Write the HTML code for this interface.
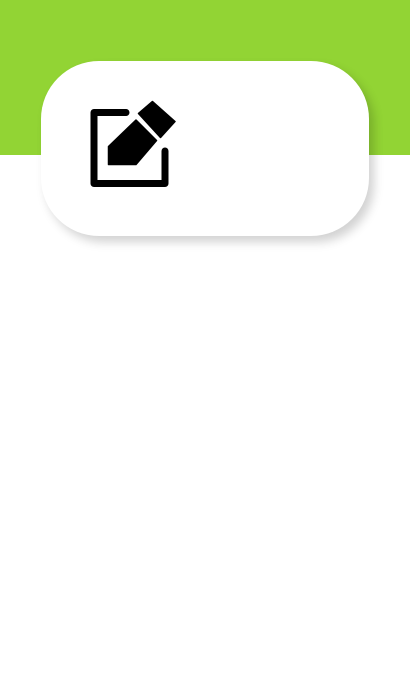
<!DOCTYPE html>
<html><head><meta charset="utf-8"><style>
html,body{margin:0;padding:0;width:410px;height:690px;background:#fff;overflow:hidden}
.band{position:absolute;left:0;top:0;width:410px;height:155px;background:#92d434}
.card{position:absolute;left:41px;top:61px;width:328px;height:175px;background:#fff;border-radius:58px;box-shadow:5px 6px 10px rgba(0,0,0,0.18)}
svg{position:absolute;left:0;top:0}
</style></head><body>
<div class="band"></div>
<div class="card"></div>
<svg width="410" height="690" viewBox="0 0 410 690">
<path d="M126 112.5 H94 V183.5 H165 V151" fill="none" stroke="#000" stroke-width="7" stroke-linecap="round" stroke-linejoin="round"/>
<path d="M108.5 146.5 L136 120 L156.5 140.5 L136 164.5 L108.5 164.5 Z" fill="#000" stroke="#000" stroke-width="1.5" stroke-linejoin="round"/>
<path d="M138.5 113.5 L152.5 101.5 L175 121.5 L160.5 137.5 Z" fill="#000" stroke="#000" stroke-width="1.5" stroke-linejoin="round"/>
</svg>
</body></html>
